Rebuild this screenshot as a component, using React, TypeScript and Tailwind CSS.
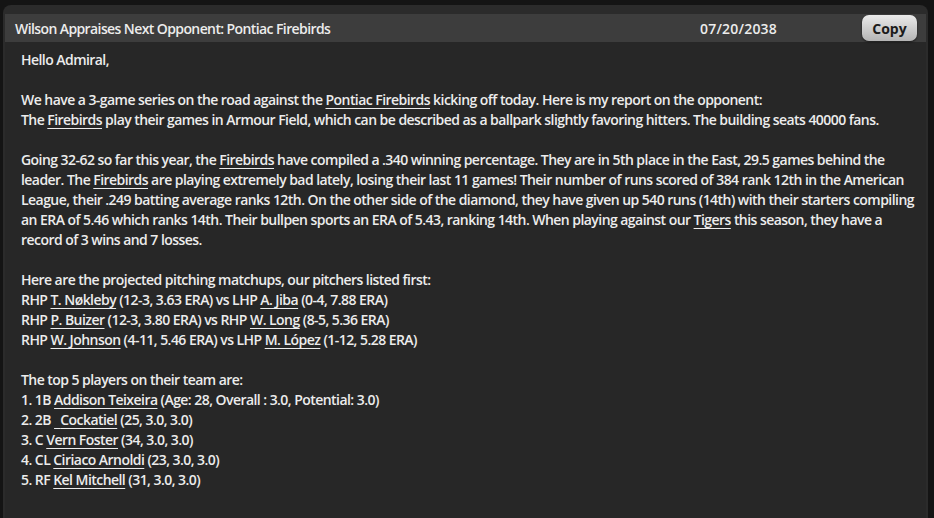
import React from 'react';

const L = ({ children }: { children: React.ReactNode }) => (
  <span className="underline underline-offset-[3px] decoration-1">{children}</span>
);

export default function App() {
  return (
    <div
      className="w-[934px] h-[518px] bg-[#141414] pt-[5px] pl-[3px] pr-[6px] overflow-hidden"
      style={{ fontFamily: '"Open Sans", "Noto Sans", sans-serif' }}
    >
      <div className="h-full rounded-t-[8px] bg-[#2b2b2b] pt-[9px] px-[2px]">
        {/* Header */}
        <div className="h-[28px] bg-[#3d3d3d] flex items-center pl-[10px] pr-[9px] text-[#ececec] text-[14px] font-semibold">
          <span className="tracking-[-0.6px]">Wilson Appraises Next Opponent: Pontiac Firebirds</span>
          <span className="ml-auto mr-[85px] tracking-[0.2px]">07/20/2038</span>
          <button className="h-[26px] w-[55px] rounded-[7px] bg-gradient-to-b from-[#ebebeb] to-[#b4b4b4] text-[#1b1b1b] text-[14px] font-bold shadow-[0_1px_2px_rgba(0,0,0,0.6)]">
            Copy
          </button>
        </div>
        {/* Body */}
        <div className="bg-[#272727] h-full pt-[8px] pl-[16px] text-[14px] leading-[20px] text-[#ececec] font-semibold tracking-[-0.55px] whitespace-nowrap">
          <div>Hello Admiral,</div>
          <div className="h-[20px]" />
          <div>
            We have a 3-game series on the road against the <L>Pontiac Firebirds</L> kicking off today. Here is my report on the opponent:
          </div>
          <div>
            The <L>Firebirds</L> play their games in Armour Field, which can be described as a ballpark slightly favoring hitters. The building seats 40000 fans.
          </div>
          <div className="h-[20px]" />
          <div>
            Going 32-62 so far this year, the <L>Firebirds</L> have compiled a .340 winning percentage. They are in 5th place in the East, 29.5 games behind the
          </div>
          <div>
            leader. The <L>Firebirds</L> are playing extremely bad lately, losing their last 11 games! Their number of runs scored of 384 rank 12th in the American
          </div>
          <div>
            League, their .249 batting average ranks 12th. On the other side of the diamond, they have given up 540 runs (14th) with their starters compiling
          </div>
          <div>
            an ERA of 5.46 which ranks 14th. Their bullpen sports an ERA of 5.43, ranking 14th. When playing against our <L>Tigers</L> this season, they have a
          </div>
          <div>record of 3 wins and 7 losses.</div>
          <div className="h-[20px]" />
          <div>Here are the projected pitching matchups, our pitchers listed first:</div>
          <div>
            RHP <L>T. Nøkleby</L> (12-3, 3.63 ERA) vs LHP <L>A. Jiba</L> (0-4, 7.88 ERA)
          </div>
          <div>
            RHP <L>P. Buizer</L> (12-3, 3.80 ERA) vs RHP <L>W. Long</L> (8-5, 5.36 ERA)
          </div>
          <div>
            RHP <L>W. Johnson</L> (4-11, 5.46 ERA) vs LHP <L>M. López</L> (1-12, 5.28 ERA)
          </div>
          <div className="h-[20px]" />
          <div>The top 5 players on their team are:</div>
          <div>
            1. 1B <L>Addison Teixeira</L> (Age: 28, Overall : 3.0, Potential: 3.0)
          </div>
          <div>
            2. 2B <L>{'\u00a0\u00a0'}Cockatiel</L> (25, 3.0, 3.0)
          </div>
          <div>
            3. C <L>Vern Foster</L> (34, 3.0, 3.0)
          </div>
          <div>
            4. CL <L>Ciriaco Arnoldi</L> (23, 3.0, 3.0)
          </div>
          <div>
            5. RF <L>Kel Mitchell</L> (31, 3.0, 3.0)
          </div>
        </div>
      </div>
    </div>
  );
}
